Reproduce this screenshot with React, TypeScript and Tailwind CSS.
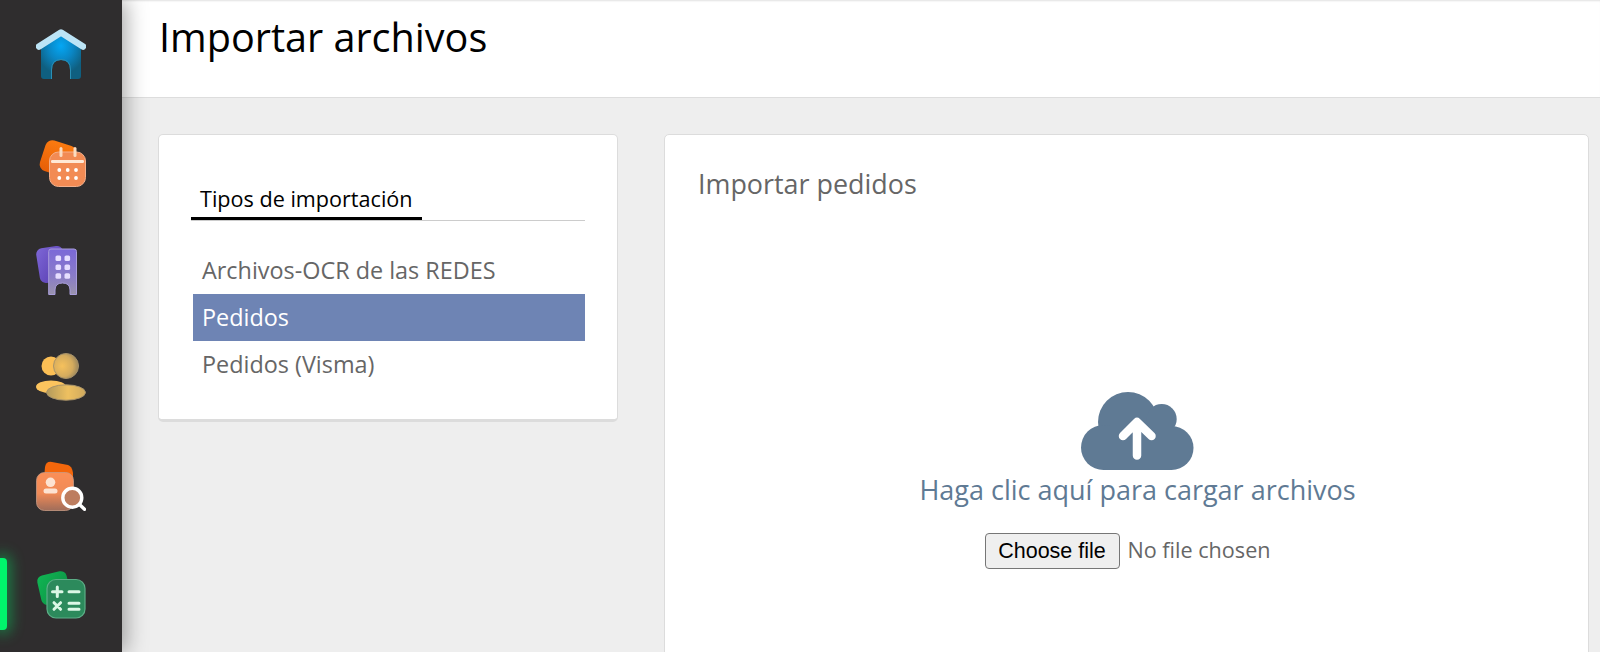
import React from "react";

function HomeIcon() {
  return (
    <svg width="50" height="50" viewBox="0 0 50 50">
      <defs>
        <radialGradient id="homeBody" cx="50%" cy="28%" r="62%">
          <stop offset="0%" stopColor="#04a7f4" />
          <stop offset="50%" stopColor="#0a86c4" />
          <stop offset="100%" stopColor="#0f5f80" />
        </radialGradient>
      </defs>
      <path d="M5 16 L25 4 L45 16 V47 Q45 50 42 50 H34 V41 Q34 31 25 31 Q16 31 16 41 V50 H8 Q5 50 5 47 Z" fill="url(#homeBody)" />
      <path d="M15.5 50 V41 Q15.5 30.5 25 30.5 Q34.5 30.5 34.5 41 V50" fill="none" stroke="#2a8fb5" strokeWidth="1" />
      <path d="M3 17.5 L25 3.5 L47 17.5" fill="none" stroke="#bce4f6" strokeWidth="6.5" strokeLinecap="round" strokeLinejoin="round" />
    </svg>
  );
}

function CalendarIcon() {
  return (
    <svg width="50" height="50" viewBox="0 0 50 50">
      <defs>
        <linearGradient id="calBack" x1="0" y1="0" x2="0" y2="1">
          <stop offset="0%" stopColor="#fb7a10" />
          <stop offset="100%" stopColor="#e65f08" />
        </linearGradient>
      </defs>
      <rect x="6" y="5.5" width="32" height="32" rx="7" fill="url(#calBack)" transform="rotate(18 22 21.5)" />
      <rect x="13.5" y="15" width="36" height="34.5" rx="9" fill="#f28b54" stroke="#f4b08c" strokeWidth="1" />
      <rect x="15" y="23" width="33" height="3" rx="1.2" fill="#ffe9d6" />
      <rect x="23.5" y="10" width="3" height="10" rx="1.5" fill="#fbdcc0" />
      <rect x="37.5" y="10" width="3" height="10" rx="1.5" fill="#fbdcc0" />
      {[23.3, 31.7, 40].map((x) =>
        [33, 41].map((y) => <circle key={`${x}-${y}`} cx={x} cy={y} r="1.9" fill="#fff" />)
      )}
    </svg>
  );
}

function BuildingIcon() {
  return (
    <svg width="50" height="50" viewBox="0 0 50 50">
      <defs>
        <linearGradient id="bBack" x1="0" y1="0" x2="1" y2="1">
          <stop offset="0%" stopColor="#7e67d6" />
          <stop offset="100%" stopColor="#5136ab" />
        </linearGradient>
        <linearGradient id="bFront" x1="0" y1="0" x2="0" y2="1">
          <stop offset="0%" stopColor="#7b68d8" />
          <stop offset="60%" stopColor="#8a7cc8" />
          <stop offset="100%" stopColor="#9a93ad" />
        </linearGradient>
      </defs>
      <rect x="2" y="2" width="27" height="35" rx="6" fill="url(#bBack)" transform="rotate(-9 15 20)" />
      <path d="M15 4 H38 Q40.5 4 40.5 6.5 V49.5 H34 V45 Q34 38 26.5 38 Q19 38 19 45 V49.5 H12.7 V6.5 Q12.7 4 15 4 Z" fill="url(#bFront)" stroke="#a99ddb" strokeWidth="1" />
      {[22.3, 31.3].map((x) =>
        [13.3, 22.3, 31].map((y) => <rect key={`${x}-${y}`} x={x - 2.8} y={y - 2.8} width="5.6" height="5.6" rx="1.6" fill="#e6deff" />)
      )}
    </svg>
  );
}

function PeopleIcon() {
  return (
    <svg width="50" height="50" viewBox="0 0 50 50">
      <defs>
        <radialGradient id="pFront" cx="35%" cy="50%" r="70%">
          <stop offset="0%" stopColor="#f6c15c" />
          <stop offset="60%" stopColor="#d4ab5e" />
          <stop offset="100%" stopColor="#8f7e5c" />
        </radialGradient>
        <linearGradient id="pBody" x1="0" y1="0" x2="1" y2="0">
          <stop offset="0%" stopColor="#b39a5c" />
          <stop offset="55%" stopColor="#eec060" />
          <stop offset="100%" stopColor="#cfa95e" />
        </linearGradient>
      </defs>
      <circle cx="15" cy="13" r="9.5" fill="#fcbf55" />
      <ellipse cx="15" cy="33.7" rx="15" ry="6.3" fill="#fcc45e" />
      <circle cx="30" cy="13" r="12.5" fill="url(#pFront)" stroke="#a8936a" strokeWidth="1" />
      <ellipse cx="30" cy="39.5" rx="19.5" ry="7.7" fill="url(#pBody)" stroke="#a8936a" strokeWidth="1" />
    </svg>
  );
}

function PersonSearchIcon() {
  return (
    <svg width="50" height="50" viewBox="0 0 50 50">
      <defs>
        <linearGradient id="psFront" x1="0" y1="0" x2="0" y2="1">
          <stop offset="0%" stopColor="#fb8f57" />
          <stop offset="55%" stopColor="#ef8a57" />
          <stop offset="100%" stopColor="#a06d5a" />
        </linearGradient>
      </defs>
      <path d="M9 6 Q10 0 16 1 L32 4 Q36 5 37 12 L37 18 H8 Z" fill="#f4670c" />
      <rect x="0.5" y="11.5" width="37" height="38" rx="8" fill="url(#psFront)" stroke="#c99a84" strokeWidth="0.8" />
      <circle cx="14.5" cy="21.3" r="4.8" fill="#fde3d2" />
      <rect x="7.5" y="27.5" width="14" height="5" rx="2.5" fill="#fde3d2" />
      <circle cx="36.3" cy="36.7" r="9.5" fill="#bd7d5f" stroke="#fff" strokeWidth="3.4" />
      <path d="M43.5 43.5 L48.5 48.3" stroke="#fff" strokeWidth="3.4" strokeLinecap="round" />
    </svg>
  );
}

function CalcIcon() {
  return (
    <svg width="50" height="50" viewBox="0 0 50 50">
      <defs>
        <linearGradient id="cBack" x1="0" y1="0" x2="1" y2="1">
          <stop offset="0%" stopColor="#10b653" />
          <stop offset="100%" stopColor="#0c8a43" />
        </linearGradient>
      </defs>
      <rect x="3" y="4" width="30" height="30" rx="6" fill="url(#cBack)" transform="rotate(-13 18 19)" />
      <rect x="11" y="10.5" width="38" height="38.5" rx="9" fill="#2c8a5c" stroke="#5cae87" strokeWidth="1.2" />
      <path d="M21.3 18 V27.6 M16.5 22.8 H26 M33 22.8 H43 M18 33.7 L24.6 40.3 M24.6 33.7 L18 40.3 M33 34.3 H43 M33 40.3 H43" stroke="#dcf7e6" strokeWidth="3" strokeLinecap="round" fill="none" />
    </svg>
  );
}

function Cloud() {
  return (
    <svg width="113" height="78" viewBox="0 0 113 78">
      <g fill="#5f7a94">
        <circle cx="47" cy="30" r="30" />
        <circle cx="22.5" cy="55.5" r="22.5" />
        <circle cx="80.7" cy="27" r="15" />
        <circle cx="90.5" cy="56" r="22" />
        <rect x="22" y="34" width="69" height="44" />
      </g>
      <path d="M56 63.5 V30 M42 44 L56 30 L70.5 44" fill="none" stroke="#fff" strokeWidth="8.5" strokeLinecap="round" strokeLinejoin="round" />
    </svg>
  );
}

const icons = [HomeIcon, CalendarIcon, BuildingIcon, PeopleIcon, PersonSearchIcon, CalcIcon];

export default function App() {
  return (
    <div className="flex h-[652px] w-[1600px] overflow-hidden bg-[#eeeeee] font-['Open_Sans',sans-serif]">
      <aside className="relative z-10 flex w-[122px] shrink-0 flex-col bg-[#2f2d2e] shadow-[4px_0_20px_rgba(0,0,0,0.35)]">
        {icons.map((Icon, i) => (
          <div key={i} className="relative flex h-[108px] shrink-0 items-center pl-[36px]">
            {i === 5 && (
              <span className="absolute left-0 top-[18px] h-[72px] w-[7px] rounded-r-[4px] bg-[#00f56c] shadow-[0_0_14px_4px_rgba(0,230,100,0.45)]" />
            )}
            <div className="blur-[0.3px]">
              <Icon />
            </div>
          </div>
        ))}
      </aside>
      <main className="flex min-w-0 flex-1 flex-col">
        <header className="flex h-[98px] shrink-0 items-start border-b border-[#dddddd] bg-white pl-[37px] pt-[12px] shadow-[inset_0_2px_2px_-1px_rgba(0,0,0,0.12)]">
          <h1 className="text-[39.6px] leading-[50px] font-normal text-black">Importar archivos</h1>
        </header>
        <div className="flex flex-1 items-start gap-[46px] pl-[36px] pr-[11px] pt-[36px]">
          <section className="h-[288px] w-[460px] shrink-0 rounded-[5px] border border-b-[3px] border-[#dcdcdc] bg-white pl-[32px] pr-[32px] pt-[49px]">
            <div className="flex border-b border-[#cccccc]">
              <div className="border-b-[3px] border-black px-[9px] pb-[3px] text-[21.6px] leading-[30px] text-black">
                Tipos de importación
              </div>
            </div>
            <ul className="mt-[26px] pl-[2px] text-[23.4px] text-[#666666]">
              <li className="flex h-[47px] items-center px-[9px]">Archivos-OCR de las REDES</li>
              <li className="flex h-[47px] items-center bg-[#6e84b4] px-[9px] text-white">Pedidos</li>
              <li className="flex h-[47px] items-center px-[9px]">Pedidos (Visma)</li>
            </ul>
          </section>
          <section className="h-[560px] min-w-0 flex-1 rounded-[5px] border border-[#dcdcdc] bg-white pl-[32px] pr-[32px] pt-[30px]">
            <h2 className="ml-px text-[26.9px] leading-[38px] font-normal text-[#666666]">Importar pedidos</h2>
            <div className="mt-[189px] flex flex-col items-center">
              <div className="ml-[22px] flex flex-col items-center">
                <Cloud />
                <p className="mt-[1px] text-[27px] leading-[38px] text-[#5f7a94]">Haga clic aquí para cargar archivos</p>
              </div>
              <label className="ml-[2px] mt-[24px] flex items-center">
                <span className="flex h-[36px] w-[135px] items-center justify-center rounded-[4px] border border-[#767676] bg-[#efefef] font-['Liberation_Sans',sans-serif] text-[21.5px] text-black">
                  Choose file
                </span>
                <span className="ml-[8px] -translate-y-px text-[21.6px] text-[#666666]">No file chosen</span>
              </label>
            </div>
          </section>
        </div>
      </main>
    </div>
  );
}
